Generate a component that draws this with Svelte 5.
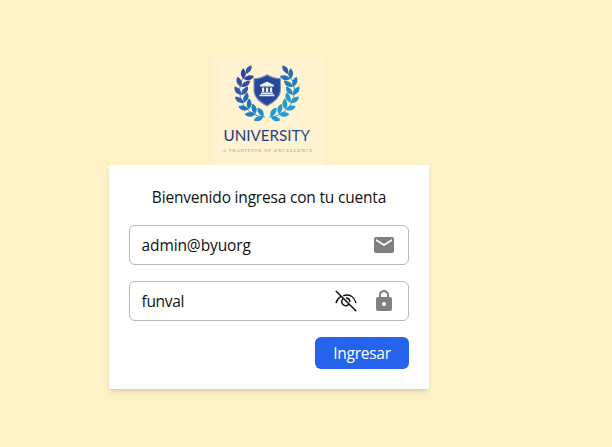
<script>
  let email = $state('admin@byuorg');
  let password = $state('funval');

  // Sprigs follow an arc around the shield; 0 degrees is the bottom of the wreath.
  const angles = [17, 36, 54, 72, 90, 108, 126];
  const sprigs = [-1, 1].flatMap((side) =>
    angles.map((angle, i) => {
      const a = (angle * Math.PI) / 180;
      return {
        x: 54 + side * 25.7 * Math.sin(a),
        y: 33 + 25.7 * Math.cos(a),
        turn: side * (90 - angle),
        color: side < 0
          ? ['#208ed0', '#1e7fc7', '#2172bf', '#2865b5', '#2d59ae', '#344ca5', '#39409c'][i]
          : ['#209bd7', '#229fda', '#209ad7', '#2097d4', '#228acb', '#247ebf', '#2872b6'][i]
      };
    })
  );
</script>

<main>
  <svg class="logo" width="112" height="108" viewBox="0 0 112 108" role="img" aria-label="University">
    <defs>
      <linearGradient id="word" x1="0" x2="1">
        <stop offset="0" stop-color="#1e3474" />
        <stop offset="1" stop-color="#294891" />
      </linearGradient>
    </defs>
    <rect width="112" height="108" fill="#fff3d2" />
    <path d="M33 16Q21 32 31 49Q40 60 52 60" fill="none" stroke="#277bbd" stroke-width=".8" />
    <path d="M75 16Q87 32 77 49Q68 60 56 60" fill="none" stroke="#2290d0" stroke-width=".8" />
    {#each sprigs as s}
      <g transform="translate({s.x} {s.y + 0.7}) rotate({s.turn})" fill={s.color}>
        <path d="M0 4.2C-6 3.5-7.3-.5-6.6-4.2C-2.2-3.2 .3 0 0 4.2Z" />
        <path d="M0 4.2C6 3.5 7.3-.5 6.6-4.2C2.2-3.2-.3 0 0 4.2Z" />
      </g>
    {/each}
    <path d="M33 17C32 12 34 9 38.5 8.5C39.5 12 37 15.5 33 17ZM75 17C76 12 74 9 69.5 8.5C68.5 12 71 15.5 75 17Z" fill="#315dac" />
    <path d="M54 17Q60 21 68 21V34Q67 43 54 49.5Q41 43 40.5 34V21Q48 21 54 17Z" fill="#8193b6" />
    <path d="M54 18.4Q60 22 66.9 22V34Q66 42 54 48.2Q42 42 41.6 34V22Q48 22 54 18.4Z" fill="#26479a" />
    <path d="M47 28L54 24.5L61 28V29.5H47ZM49 30.5H51.2V35H49ZM53 30.5H55.2V35H53ZM57 30.5H59.2V35H57ZM48 35.5H60V37H48ZM46.5 37.5H61.5V39.2H46.5Z" fill="#eef0e9" />
    <text x="10.5" y="84.3" class="name" textLength="86.5" lengthAdjust="spacingAndGlyphs" fill="url(#word)">UNIVERSITY</text>
    <text x="9.5" y="95" class="tagline" textLength="90" lengthAdjust="spacing">A TRADITION OF EXCELLENCE</text>
  </svg>

  <form onsubmit={(e) => e.preventDefault()}>
    <h1>Bienvenido ingresa con tu cuenta</h1>
    <label class="field">
      <input type="text" aria-label="Correo" bind:value={email} />
      <svg class="gray" width="24" height="24" viewBox="0 0 24 24"><path d="M20 4H4c-1.1 0-2 .9-2 2v12c0 1.1.9 2 2 2h16c1.1 0 2-.9 2-2V6c0-1.1-.9-2-2-2zm0 4-8 5-8-5V6l8 5 8-5v2z" /></svg>
    </label>
    <label class="field">
      <input class="tight" type="text" aria-label="Contraseña" bind:value={password} />
      <svg class="eye" width="24" height="24" viewBox="0 0 24 24" fill="none" stroke="#111" stroke-width="1.5" stroke-linecap="round">
        <path d="M2.2 2.2 21.8 21.8M2.2 13.5C3 10.7 4.5 8.7 7 7.4M9.8 6.5C15.8 5 20.3 8 21.8 13.5M9.3 9.5A4 4 0 1 0 15 15M12.5 9.1A4 4 0 0 1 15.9 12.6" />
      </svg>
      <svg class="gray" width="24" height="24" viewBox="0 0 24 24"><path d="M18 8h-1V6c0-2.76-2.24-5-5-5S7 3.24 7 6v2H6c-1.1 0-2 .9-2 2v10c0 1.1.9 2 2 2h12c1.1 0 2-.9 2-2V10c0-1.1-.9-2-2-2zm-6 9c-1.1 0-2-.9-2-2s.9-2 2-2 2 .9 2 2-.9 2-2 2zm3.1-9H8.9V6c0-1.71 1.39-3.1 3.1-3.1s3.1 1.39 3.1 3.1v2z" /></svg>
    </label>
    <button type="submit">Ingresar</button>
  </form>
</main>

<style>
  :global(body) {
    background: #fff1c6;
  }
  main {
    box-sizing: border-box;
    width: 538px;
    height: 447px;
    padding-top: 57px;
    display: flex;
    flex-direction: column;
    align-items: center;
    font: 16px/24px "Open Sans", "Noto Sans", sans-serif;
    color: #111;
  }
  .logo {
    display: block;
    flex: none;
  }
  .name {
    font: 15.5px Lato, sans-serif;
  }
  .tagline {
    font: 4.8px "Liberation Serif", serif;
    fill: #8d929a;
  }
  form {
    box-sizing: border-box;
    width: 320px;
    height: 224px;
    padding: 20px;
    display: flex;
    flex-direction: column;
    gap: 16px;
    background: #fff;
    box-shadow: 0 4px 6px -1px rgb(0 0 0 / 10%), 0 2px 4px -2px rgb(0 0 0 / 10%);
  }
  h1 {
    margin: 0;
    font: inherit;
    font-size: 15.5px;
    line-height: 24px;
    text-align: center;
    white-space: nowrap;
    letter-spacing: -0.19px;
  }
  .field {
    box-sizing: border-box;
    height: 40px;
    padding: 0 12px 0 11.5px;
    display: flex;
    align-items: center;
    gap: 14px;
    border: 1px solid #b7b7b7;
    border-radius: 6px;
  }
  input {
    flex: 1;
    min-width: 0;
    padding: 0;
    border: 0;
    outline: 0;
    background: none;
    color: inherit;
    font: inherit;
    font-size: 15.5px;
    letter-spacing: -0.1px;
  }
  .tight {
    letter-spacing: -0.3px;
  }
  .field svg {
    flex: none;
  }
  .gray {
    fill: #808080;
  }
  button {
    align-self: flex-end;
    width: 94px;
    height: 32px;
    padding: 0;
    border: 0;
    border-radius: 6px;
    background: #2563eb;
    color: #fff;
    font: inherit;
    font-size: 15.5px;
    letter-spacing: -0.25px;
  }
</style>
